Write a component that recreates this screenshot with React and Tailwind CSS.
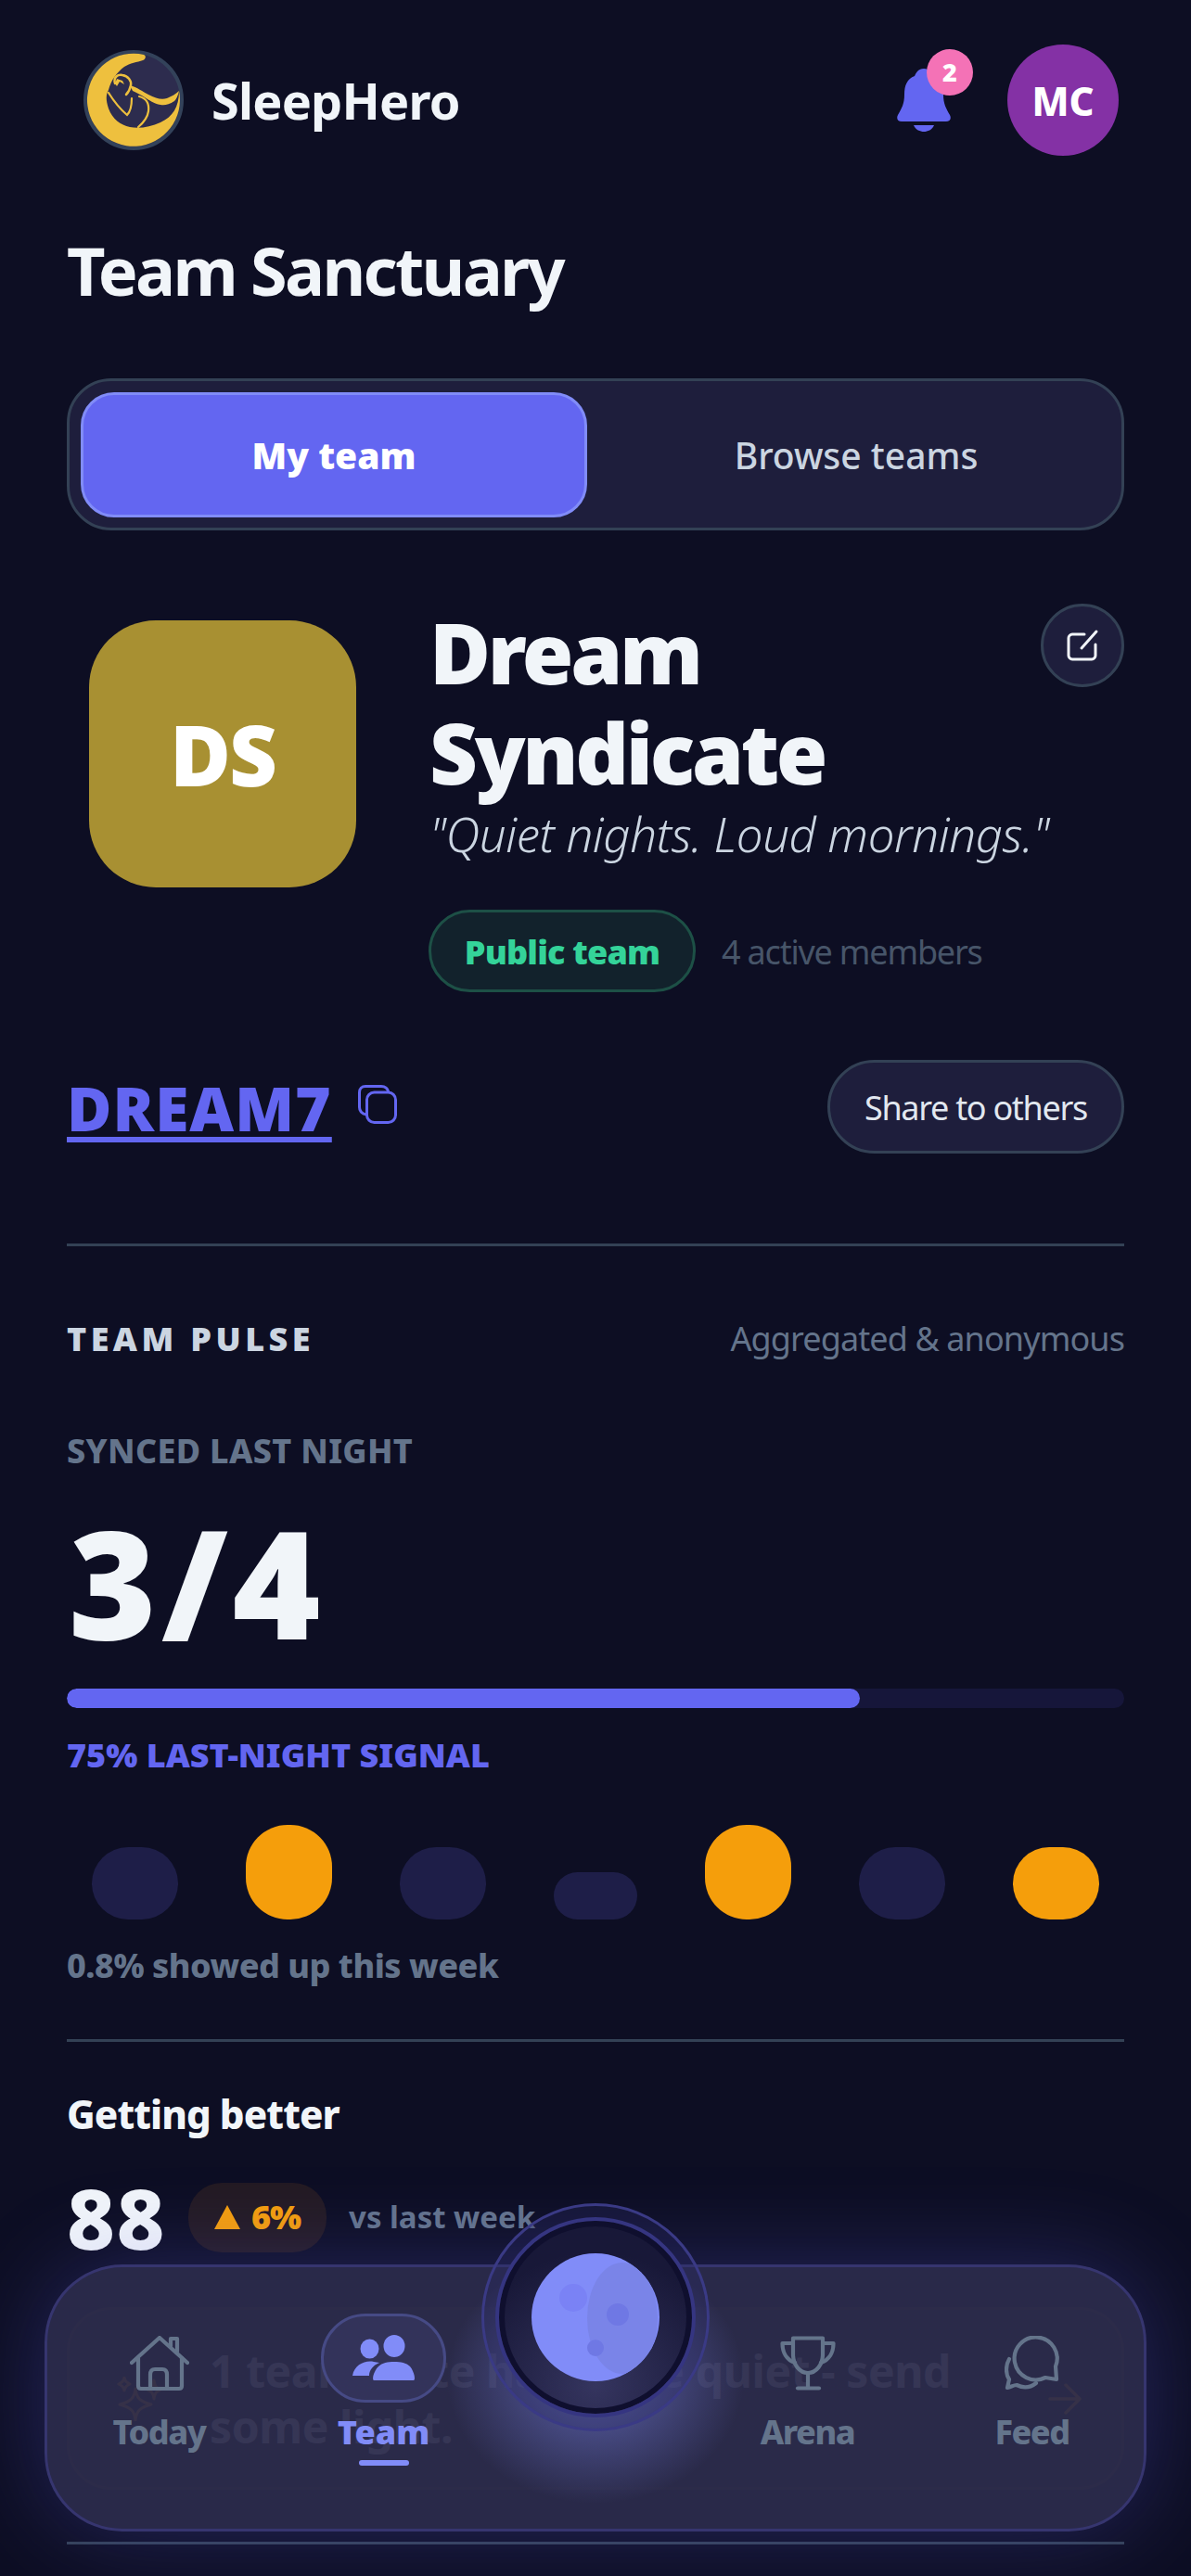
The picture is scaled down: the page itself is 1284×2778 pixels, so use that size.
import React from 'react';

const font = { fontFamily: '"Noto Sans", sans-serif' };

function Logo() {
  return (
    <svg viewBox="0 0 108 108" className="w-[108px] h-[108px] shrink-0">
      <circle cx="54" cy="54" r="52" fill="#2d2c4e" stroke="#33425a" strokeWidth="4" />
      {/* crescent */}
      <path d="M65 5 A50 50 0 1 0 103 44 C103 62 96 72 83 78 C72 83 60 85 50 83 C40 81 31 74 27 63 C24 54 24 48 27 43 C30 32 36 24 44 18 C50 14 58 13 64 11 C67 10 68 6 65 5Z" fill="#eec03e" />
      {/* cape */}
      <path d="M50 38 C58 40 64 45 70 48 C78 52 84 54 90 52 C95 50 100 47 103 44 C102 49 100 53 98 55 C92 59 87 60 83 59 C76 58 71 54 66 51 C62 48 57 46 53 44Z" fill="#eec03e" />
      {/* head */}
      <path d="M34 36 C32 29 37 26 42 27 C48 28 52 33 51 38 C50 43 48 46 46 48" fill="none" stroke="#eec03e" strokeWidth="2.500" strokeLinecap="round" />
      <path d="M34 36 L36 39 L39 34 L44 37 L42 33 L36 31Z" fill="#eec03e" />
      {/* arm and shoulder */}
      <path d="M27 46 C32 54 40 64 47 70 C51 66 52 60 52 52" fill="none" stroke="#eec03e" strokeWidth="2.200" strokeLinecap="round" />
      <path d="M60 50 C68 52 71 58 70 66 C69 73 65 78 59 83" fill="none" stroke="#eec03e" strokeWidth="2.200" strokeLinecap="round" />
    </svg>
  );
}

function Bell() {
  return (
    <svg viewBox="0 0 60 68" className="w-[60px] h-[68px]" fill="#6366f1">
      <path d="M30 0 C36 0 38 4 40 8 C48 11 51 18 51 28 C51 38 54 43 58 50 C60 54 58 57 54 57 L6 57 C2 57 0 54 2 50 C6 43 9 38 9 28 C9 18 12 11 20 8 C22 4 24 0 30 0Z" />
      <path d="M19 61 L41 61 C39 66 34 68 30 68 C26 68 21 66 19 61Z" />
    </svg>
  );
}

function EditIcon() {
  return (
    <svg viewBox="0 0 36 36" className="w-[36px] h-[36px]" fill="none" stroke="#f1f5f9" strokeWidth="3" strokeLinecap="round" strokeLinejoin="round">
      <path d="M20 6 L7 6 C5 6 3 8 3 10 L3 29 C3 31 5 33 7 33 L28 33 C30 33 32 31 32 29 L32 17" />
      <path d="M17 21 L33 3" />
    </svg>
  );
}

function CopyIcon() {
  return (
    <svg viewBox="0 0 42 42" className="w-[42px] h-[42px] mb-[6px]" fill="none" stroke="#6366f1" strokeWidth="3">
      <rect x="9.500" y="8" width="31" height="32.500" rx="8" />
      <path d="M9 32 C4 31 1.500 28 1.500 24 L1.500 8 C1.500 4 4 1.500 8 1.500 L25 1.500 C29 1.500 32 4 33 8" />
    </svg>
  );
}

function Sparkles() {
  return (
    <svg viewBox="0 0 48 48" className="w-[48px] h-[48px] shrink-0" fill="none" stroke="#f59e0b" strokeWidth="3" strokeLinejoin="round">
      <path d="M20 13 C21 23 25 27 37 30 C25 33 21 37 20 47 C19 37 15 33 3 30 C15 27 19 23 20 13Z" />
      <path d="M8 1 C9 5 10 6 14 8 C10 10 9 11 8 15 C7 11 6 10 2 8 C6 6 7 5 8 1Z" />
      <path d="M40 4 C41 10 42 12 47 14 C42 16 41 18 40 24 C39 18 38 16 33 14 C38 12 39 10 40 4Z" />
    </svg>
  );
}

function House() {
  return (
    <svg viewBox="0 0 64 60" className="w-[64px] h-[60px]" fill="none" stroke="#64748b" strokeWidth="4.200" strokeLinecap="round" strokeLinejoin="round">
      <path d="M2 29 L32 2 L62 29" />
      <path d="M44 11 L44 3 L51 3 L51 17" />
      <path d="M9 24 L9 54 C9 56 10 57 12 57 L53 57 C55 57 56 56 56 54 L56 24" />
      <path d="M22 57 L22 42 C22 38 24 36 27 36 L35 36 C38 36 40 38 40 42 L40 57" />
    </svg>
  );
}

function People() {
  return (
    <svg viewBox="0 0 68 50" className="w-[68px] h-[50px]" fill="#818cf8">
      <ellipse cx="18.500" cy="15" rx="10" ry="10.500" />
      <ellipse cx="45" cy="12" rx="11.500" ry="12" />
      <path d="M23 29 C14 27 2 32 0 44 L18 44 C18 38 22 33 29 30Z" />
      <path d="M23 49 C21 49 22 40 28 34 C32 30 38 29 45 29 C52 29 58 30 62 34 C67 40 68 49 66 49Z" />
    </svg>
  );
}

function Trophy() {
  return (
    <svg viewBox="0 0 60 60" className="w-[60px] h-[60px]" fill="none" stroke="#64748b" strokeWidth="4.200" strokeLinecap="round" strokeLinejoin="round">
      <path d="M14 2.500 L46 2.500 L46 20 C46 31 39 40 30 40 C21 40 14 31 14 20Z" />
      <path d="M14 8 L2.500 8 C2.500 18 7 26 16 29" />
      <path d="M46 8 L57.500 8 C57.500 18 53 26 44 29" />
      <path d="M30 40 L30 56" />
      <path d="M19 56.500 L42 56.500" />
    </svg>
  );
}

function Chat() {
  return (
    <svg viewBox="0 0 60 60" className="w-[60px] h-[60px]" fill="none" stroke="#64748b" strokeWidth="4.200" strokeLinecap="round" strokeLinejoin="round">
      <path d="M44 45 A23 23 0 1 1 55 33 L56 47Z" />
      <path d="M5 25 C1 32 1 41 5 47 L3 56 C7 55 10 53 13 53 C17 55 25 58 34 51" />
    </svg>
  );
}

function Moon() {
  return (
    <div className="relative w-[138px] h-[138px] rounded-full bg-[#818cf8] overflow-hidden">
      <div className="absolute left-[60px] top-[10px] w-[76px] h-[120px] rounded-[50%] bg-[#7a84e8]" />
      <div className="absolute left-[30px] top-[33px] w-[30px] h-[30px] rounded-full bg-[#7a82f5]" />
      <div className="absolute left-[81px] top-[54px] w-[24px] h-[24px] rounded-full bg-[#6f78e4]" />
      <div className="absolute left-[60px] top-[93px] w-[18px] h-[18px] rounded-full bg-[#6f78e4]" />
    </div>
  );
}

function NavItem({ label, children, active, className }) {
  return (
    <div className={`absolute top-[50px] flex flex-col items-center ${className}`}>
      <div className={`w-[135px] h-[96px] flex items-center justify-center rounded-[48px] border-[3px] ${active ? 'border-[#464a85] bg-[#33335a]' : 'border-transparent pt-[12px]'}`}>
        {children}
      </div>
      <div className={`mt-[5px] text-[36px] leading-[54px] ${active ? 'font-black text-[#818cf8]' : 'font-extrabold tracking-[-1.5px] text-[#64748b]'}`}>{label}</div>
      {active && <div className="mt-[3px] w-[54px] h-[6px] rounded-[3px] bg-[#818cf8]" />}
    </div>
  );
}

function Pill({ on, h, w = 'w-[93px]' }) {
  return <div className={`${w} ${h} rounded-[45px] ${on ? 'bg-[#f59e0b]' : 'bg-[#1e1e48]'}`} />;
}

export default function App() {
  return (
    <div className="relative w-[1284px] h-[2778px] overflow-hidden bg-[#0d0e23]" style={font}>
      <div className="px-[72px]">
        {/* header */}
        <div className="flex items-center justify-between h-[216px] pl-[18px] pr-[6px]">
          <div className="flex items-center gap-[30px]">
            <Logo />
            <span className="text-[54px] font-bold tracking-[-0.8px] text-[#f1f5f9]">SleepHero</span>
          </div>
          <div className="flex items-center gap-[60px]">
            <div className="relative">
              <Bell />
              <div className="absolute -top-[21px] left-[33px] w-[50px] h-[50px] rounded-full bg-[#f472b6] flex items-center justify-center text-[27px] font-black text-white">2</div>
            </div>
            <div className="w-[120px] h-[120px] rounded-full bg-[#8431a5] flex items-center justify-center text-[42px] font-extrabold text-white">MC</div>
          </div>
        </div>

        <h1 className="mt-[30px] text-[72px] leading-[90px] font-bold tracking-[-2.7px] text-[#f1f5f9]">Team Sanctuary</h1>

        {/* tabs */}
        <div className="mt-[72px] h-[164px] flex items-center p-[12px] rounded-[48px] border-[3px] border-[#334155] bg-[#1e1e3c]">
          <div className="w-[546px] h-[135px] flex items-center justify-center pt-[2px] rounded-[36px] border-[3px] border-[#818cf8] bg-[#6366f1] text-[39px] font-black text-white">My team</div>
          <div className="flex-1 flex items-center justify-center pl-[16px] pt-[2px] text-[39px] font-medium text-[#cbd5e1]">Browse teams</div>
        </div>

        {/* team identity */}
        <div className="relative mt-[79px] flex items-start pl-[24px]">
          <div className="w-[288px] h-[288px] mt-[18px] shrink-0 rounded-[72px] bg-[#a89032] flex items-center justify-center text-[90px] font-black tracking-[-2px] text-white">DS</div>
          <div className="ml-[79px] w-[700px]">
            <div className="-mt-[2px] mb-[2px] text-[90px] leading-[108px] font-black tracking-[-3.300px] text-[#f1f5f9] w-[500px]">Dream Syndicate</div>
            <div className="-mt-[4px] text-[51px] leading-[72px] italic font-light tracking-[-0.4px] text-[#cbd5e1] whitespace-nowrap">"Quiet nights. Loud mornings."</div>
            <div className="mt-[46px] flex items-center gap-[28px]">
              <div className="-ml-[1px] w-[288px] h-[89px] flex items-center justify-center pt-[2px] rounded-full border-[3px] border-[#1d5046] bg-[#12222c] text-[36px] font-black tracking-[-0.8px] text-[#34d399]">Public team</div>
              <span className="pt-[2px] text-[36px] tracking-[-1.2px] text-[#475569]">4 active members</span>
            </div>
          </div>
          <div className="absolute right-0 top-0 w-[90px] h-[90px] rounded-full border-[3px] border-[#334155] bg-[#1e1e3c] flex items-center justify-center">
            <EditIcon />
          </div>
        </div>

        {/* join code */}
        <div className="mt-[73px] flex items-center justify-between">
          <div className="flex items-center gap-[28px]">
            <span className="text-[66px] leading-[72px] font-black tracking-[1px] text-[#6366f1] underline decoration-[6px] underline-offset-[6px]">DREAM7</span>
            <CopyIcon />
          </div>
          <div className="w-[320px] h-[101px] flex items-center justify-center pt-[3px] rounded-full border-[3px] border-[#334155] bg-[#1e1e3c] text-[36px] tracking-[-1.3px] text-[#e2e8f0]">Share to others</div>
        </div>

        <div className="mt-[97px] h-[3px] bg-[#334155]" />

        {/* team pulse */}
        <div className="mt-[73px] flex items-center justify-between">
          <span className="text-[36px] leading-[54px] font-black tracking-[4.400px] text-[#cbd5e1]">TEAM PULSE</span>
          <span className="text-[36px] leading-[54px] tracking-[-0.9px] text-[#64748b]">Aggregated &amp; anonymous</span>
        </div>
        <div className="mt-[67px] text-[36px] leading-[54px] font-extrabold tracking-[0.3px] text-[#64748b]">SYNCED LAST NIGHT</div>
        <div className="mt-[23px] ml-[2px] text-[162px] leading-[180px] font-black tracking-[5px] text-[#f1f5f9]">3/4</div>
        <div className="mt-[26px] h-[21px] rounded-full bg-[#16163a] overflow-hidden">
          <div className="h-full rounded-full bg-[#6366f1]" style={{ width: '75%' }} />
        </div>
        <div className="mt-[24px] text-[36px] leading-[54px] font-black text-[#6366f1]">75% LAST-NIGHT SIGNAL</div>

        <div className="mt-[48px] px-[27px] flex items-end justify-between">
          <Pill h="h-[78px]" />
          <Pill on h="h-[102px]" />
          <Pill h="h-[78px]" />
          <Pill h="h-[51px]" w="w-[90px]" />
          <Pill on h="h-[102px]" />
          <Pill h="h-[78px]" />
          <Pill on h="h-[78px]" />
        </div>
        <div className="mt-[23px] text-[36px] leading-[54px] font-extrabold tracking-[-0.5px] text-[#64748b]">0.8% showed up this week</div>

        <div className="mt-[52px] h-[3px] bg-[#334155]" />

        {/* score */}
        <div className="mt-[51px] text-[42px] leading-[54px] font-extrabold tracking-[-0.9px] text-[#f1f5f9]">Getting better</div>
        <div className="mt-[39px] flex items-center">
          <span className="text-[90px] leading-[90px] font-extrabold tracking-[1.5px] text-[#f1f5f9]">88</span>
          <div className="ml-[24px] w-[149px] h-[75px] flex items-center justify-center gap-[12px] rounded-[36px] bg-[#231a22] text-[36px] font-black tracking-[-1px] text-[#f59e0b]">
            <svg viewBox="0 0 28 26" className="w-[28px] h-[26px]" fill="#f59e0b"><path d="M14 0 L28 26 L0 26Z" /></svg>
            6%
          </div>
          <span className="ml-[24px] text-[33px] font-bold text-[#64748b]">vs last week</span>
        </div>

        {/* quiet teammate card, mostly hidden behind the nav */}
        <div className="mt-[52px] h-[197px] rounded-[48px] border-[3px] border-[#f59e0b]/20 bg-[#f59e0b]/5 flex items-center pl-[51px] pr-[43px] gap-[52px]">
          <Sparkles />
          <div className="flex-1 text-[48px] leading-[60px] font-bold tracking-[-0.4px] text-[#f1f5f9]">1 teammate has gone quiet - send some light.</div>
          <svg viewBox="0 0 36 36" className="w-[36px] h-[36px] shrink-0" fill="none" stroke="#f59e0b" strokeWidth="3.500" strokeLinecap="round" strokeLinejoin="round"><path d="M2 18 L34 18 M19 3 L34 18 L19 33" /></svg>
        </div>
        <div className="mt-[56px] h-[3px] bg-[#334155]" />
      </div>

      {/* bottom nav */}
      <div className="absolute left-[48px] top-[2442px] w-[1188px] h-[288px] rounded-[84px] border-[3px] border-[#36356f] bg-[#2b2b4c]/95 shadow-[0_0_100px_rgba(99,102,241,0.28)]">
        <NavItem label="Today" className="left-[53px]"><House /></NavItem>
        <NavItem label="Team" active className="left-[295px]"><People /></NavItem>
        <NavItem label="Arena" className="left-[752px]"><Trophy /></NavItem>
        <NavItem label="Feed" className="left-[994px]"><Chat /></NavItem>
      </div>

      {/* glow under the moon button */}
      <div className="absolute left-[482px] top-[2430px] w-[320px] h-[270px] bg-[radial-gradient(closest-side,rgba(129,140,248,0.55),rgba(129,140,248,0))]" />

      {/* moon button */}
      <div className="absolute left-[519px] top-[2376px] w-[246px] h-[246px] rounded-full border-[3px] border-[#3a3a85] bg-[#2a2a6a]/30 flex items-center justify-center">
        <div className="w-[216px] h-[216px] rounded-full border-[4px] border-[#353581] bg-[radial-gradient(circle_at_50%_85%,#35355f,#181838_70%)] shadow-[inset_0_0_0_6px_#0f0f2e] flex items-center justify-center">
          <Moon />
        </div>
      </div>
    </div>
  );
}
